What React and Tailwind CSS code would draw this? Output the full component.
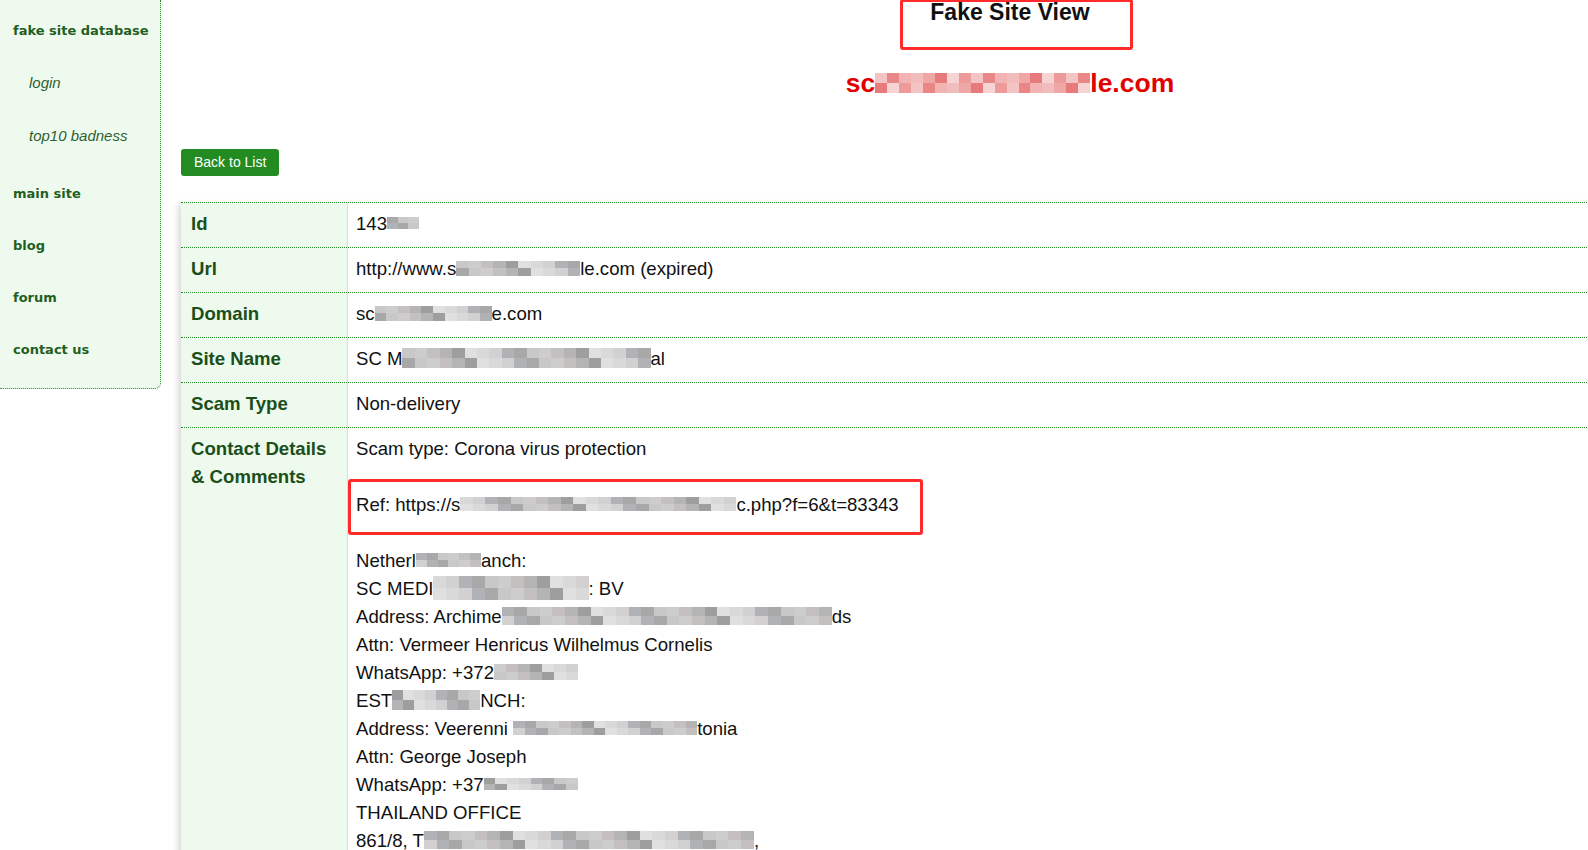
import React from 'react';

const gray = ['#c8c8c8', '#b4b4b4', '#d9d9d9', '#a8a8a8', '#c4c0c0', '#e0e0e0', '#b0b2b6', '#cdcdcd', '#9e9e9e', '#d2d0d0'];
const pink = ['#f2b3b3', '#e98686', '#f4c4c4', '#ec9a9a', '#f7d4d4', '#e77a7a', '#efa6a6', '#f0bcbc'];

// pixelated blur block, like the mosaic in the screenshot
const Mosaic = ({ cells = 8, palette = gray, className = 'w-[60px] h-[16px]' }) => (
    <span className={`inline-flex flex-col align-middle -mt-[4px] ${className}`}>
        {[0, 1].map(r => (
            <span key={r} className="flex flex-1">
                {Array.from({ length: cells }).map((_, i) => (
                    <span
                        key={i}
                        className="flex-1"
                        style={{ background: palette[(i * 7 + r * 3 + cells) % palette.length] }}
                    />
                ))}
            </span>
        ))}
    </span>
);

const Sidebar = () => (
    <div className="w-[161px] shrink-0 self-start h-[389px] bg-[#effaef] border-r border-b border-dotted border-[#228b22] rounded-br-[6px] pt-[4px] font-['DejaVu_Sans',sans-serif]">
        <div className="h-[53px] flex items-center pl-[13px] text-[13px] font-bold text-[#1f5f1f]">fake site database</div>
        <div className="h-[53px] flex items-center pl-[29px] text-[15px] italic text-[#2f5f2f] font-['Liberation_Sans',sans-serif]">login</div>
        <div className="h-[53px] flex items-center pl-[29px] text-[15px] italic text-[#2f5f2f] font-['Liberation_Sans',sans-serif]">top10 badness</div>
        <div className="h-[52px] mt-[5px] flex items-center pl-[13px] text-[13px] font-bold text-[#1f5f1f]">main site</div>
        <div className="h-[52px] flex items-center pl-[13px] text-[13px] font-bold text-[#1f5f1f]">blog</div>
        <div className="h-[52px] flex items-center pl-[13px] text-[13px] font-bold text-[#1f5f1f]">forum</div>
        <div className="h-[52px] flex items-center pl-[13px] text-[13px] font-bold text-[#1f5f1f]">contact us</div>
    </div>
);

const Row = ({ label, children }) => (
    <div className="grid grid-cols-[167px_1fr] border-b border-dotted border-[#228b22]">
        <div className="bg-[#effaef] border-r border-[#c6ebc6] pl-[10px] pt-[7px] pb-[9px] font-bold text-[#1a4f1a]">{label}</div>
        <div className="pl-2 pt-[7px] pb-[9px] text-[#111]">{children}</div>
    </div>
);

const App = () => {
    return (
        <div className="flex w-screen h-screen overflow-hidden bg-white font-['Liberation_Sans',Arial,sans-serif]">
            <Sidebar />
            <div className="w-[1678px] shrink-0 pl-[20px]">
                <div className="relative">
                    <h1 className="text-center text-[23px] leading-[24px] font-bold text-[#111]">Fake Site View</h1>
                    <div className="absolute left-[719px] -top-[1px] w-[233px] h-[51px] border-[3px] border-[#ff2a2a] rounded-[3px]"></div>
                </div>
                <div className="mt-[43px] text-center text-[26.5px] leading-[32px] font-bold text-[#e10000]">
                    sc<Mosaic cells={18} palette={pink} className="w-[215px] h-[20px]" />le.com
                </div>
                <button className="mt-[50px] block bg-[#228b22] text-white text-[14px] leading-[27px] px-[13px] rounded-[3px]">
                    Back to List
                </button>
                <div className="mt-[26px] border-t border-dotted border-[#228b22] shadow-[-3px_2px_6px_rgba(0,0,0,0.15)] text-[18.6px] leading-[28px]">
                    <Row label="Id">143<Mosaic cells={3} className="w-[32px] h-[12px]" /></Row>
                    <Row label="Url">http://www.s<Mosaic cells={10} className="w-[124px] h-[15px]" />le.com (expired)</Row>
                    <Row label="Domain">sc<Mosaic cells={10} className="w-[117px] h-[15px]" />e.com</Row>
                    <Row label="Site Name">SC M<Mosaic cells={20} className="w-[248px] h-[20px]" />al</Row>
                    <Row label="Scam Type">Non-delivery</Row>
                    <div className="grid grid-cols-[167px_1fr] h-[430px]">
                        <div className="bg-[#effaef] border-r border-[#c6ebc6] pl-[10px] pt-[7px] font-bold text-[#1a4f1a]">
                            Contact Details<br />&amp; Comments
                        </div>
                        <div className="pl-2 pt-[7px] text-[#111]">
                            <div>Scam type: Corona virus protection</div>
                            <div className="h-[28px]"></div>
                            <div className="relative">
                                Ref: https://s<Mosaic cells={22} className="w-[276px] h-[14px]" />c.php?f=6&amp;t=83343
                                <div className="absolute -left-[8px] -top-[12px] w-[575px] h-[56px] border-[3px] border-[#ff2a2a] rounded-[3px]"></div>
                            </div>
                            <div className="h-[28px]"></div>
                            <div>Netherl<Mosaic cells={6} className="w-[65px] h-[14px]" />anch:</div>
                            <div>SC MEDI<Mosaic cells={12} className="w-[155px] h-[24px]" />: BV</div>
                            <div>Address: Archime<Mosaic cells={26} className="w-[330px] h-[18px]" />ds</div>
                            <div>Attn: Vermeer Henricus Wilhelmus Cornelis</div>
                            <div>WhatsApp: +372<Mosaic cells={7} className="w-[84px] h-[16px]" /></div>
                            <div>EST<Mosaic cells={8} className="w-[88px] h-[20px]" />NCH:</div>
                            <div>Address: Veerenni <Mosaic cells={16} className="w-[184px] h-[14px]" />tonia</div>
                            <div>Attn: George Joseph</div>
                            <div>WhatsApp: +37<Mosaic cells={8} className="w-[94px] h-[12px]" /></div>
                            <div>THAILAND OFFICE</div>
                            <div>861/8, T<Mosaic cells={26} className="w-[330px] h-[18px]" />,</div>
                        </div>
                    </div>
                </div>
            </div>
        </div>
    );
};

export default App;
